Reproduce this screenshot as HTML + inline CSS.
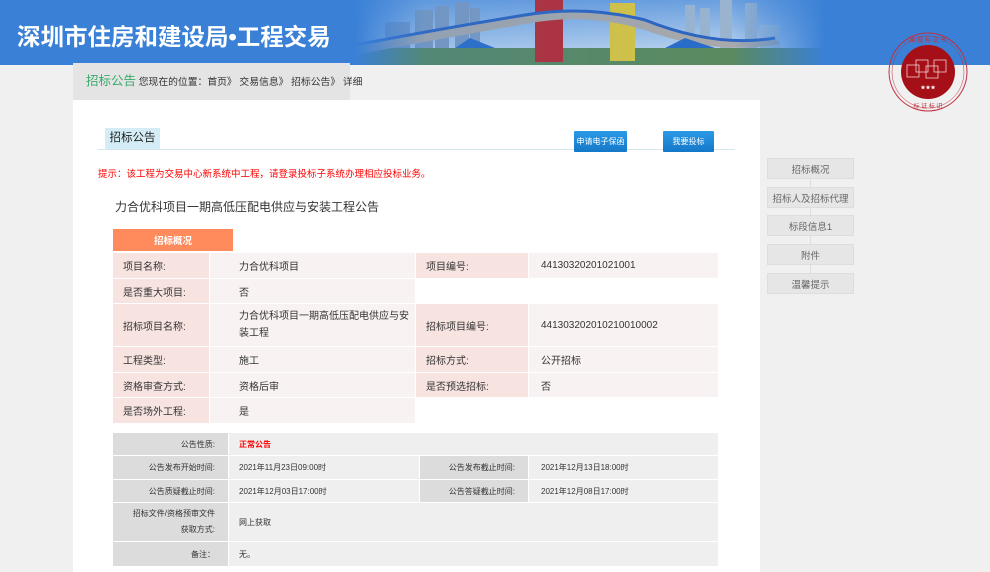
<!DOCTYPE html>
<html><head><meta charset="utf-8"><style>
*{margin:0;padding:0;box-sizing:border-box}
body{width:990px;height:572px;overflow:hidden;background:#f0f0f0;font-family:"Liberation Sans","Noto Sans CJK SC",sans-serif;position:relative;color:#333}
.a{position:absolute}
.hdr{left:0;top:0;width:990px;height:65px;background:#3a80d6}
.title{left:17px;top:18px;font-size:23.5px;font-weight:bold;color:#fff;white-space:nowrap}
.bc{left:73px;top:63px;width:277px;height:37px;background:#e4e4e4;font-size:9.8px;line-height:37px;padding-left:13px;white-space:nowrap;color:#333}
.bc b{font-weight:normal;color:#3aaa6a;font-size:12.5px}
.main{left:73px;top:100px;width:687px;height:472px;background:#fff}
.c{position:absolute;font-size:10px;color:#333;display:flex;align-items:center;white-space:nowrap}
.t2{font-size:8px}
.l2{background:#dcdcdc;justify-content:flex-end;padding-right:13px}
.v2{background:#efefef}
.btn{position:absolute;height:21px;background:linear-gradient(#2b9ae6,#1478c8);color:#fff;font-size:8px;display:flex;align-items:center;justify-content:center;border-radius:1px;white-space:nowrap}
.nav{position:absolute;left:767px;width:87px;height:21px;background:#e6e6e6;border:1px solid #ddd;font-size:9.5px;color:#666;display:flex;align-items:center;justify-content:center}
</style></head><body>
<div class="a hdr"></div>
<svg class="a" style="left:355px;top:0" width="470" height="65" viewBox="0 0 470 65">
<defs>
<linearGradient id="sky" x1="0" y1="0" x2="0" y2="1"><stop offset="0" stop-color="#6a9fdf"/><stop offset="1" stop-color="#d0e2f2"/></linearGradient>
<linearGradient id="fl" x1="0" x2="1"><stop offset="0" stop-color="#3a80d6"/><stop offset="0.15" stop-color="#3a80d6" stop-opacity="0.2"/><stop offset="0.8" stop-color="#3a80d6" stop-opacity="0"/><stop offset="1" stop-color="#3a80d6"/></linearGradient>
</defs>
<rect width="470" height="65" fill="url(#sky)"/>
<g fill="#7f9cc0">
<rect x="30" y="22" width="25" height="43"/><rect x="60" y="10" width="18" height="55"/><rect x="80" y="6" width="14" height="59"/><rect x="100" y="2" width="14" height="63"/><rect x="115" y="8" width="10" height="57"/>
<rect x="330" y="5" width="10" height="60" fill="#9ab4d0"/><rect x="345" y="8" width="10" height="57" fill="#9ab4d0"/><rect x="365" y="0" width="12" height="65" fill="#9ab4d0"/><rect x="390" y="3" width="12" height="62" fill="#9ab4d0"/><rect x="405" y="25" width="20" height="40" fill="#a8c0d8"/>
</g>
<rect x="0" y="48" width="470" height="17" fill="#5a8a5e"/>
<rect x="180" y="0" width="28" height="62" fill="#b92a30"/>
<rect x="255" y="3" width="25" height="58" fill="#d9c640"/>
<path d="M0 45 Q90 28 170 15 Q230 5 290 20 Q360 48 420 38 L425 44 Q360 56 290 30 Q230 12 170 24 Q90 38 0 55Z" fill="#a9a9a9"/>
<path d="M0 45 Q90 28 170 15 Q230 5 290 20 Q360 48 420 38" fill="none" stroke="#2c64c0" stroke-width="3"/>
<path d="M100 48 L115 38 L140 48Z M310 48 L330 38 L360 48Z" fill="#2a6cc8"/>
<rect width="470" height="65" fill="url(#fl)"/>
</svg>
<div class="a title">深圳市住房和建设局•工程交易</div>
<div class="a bc"><b>招标公告</b> 您现在的位置：首页》 交易信息》 招标公告》 详细</div>
<svg class="a" style="left:886px;top:30px" width="84" height="84" viewBox="0 0 84 84">
<circle cx="42" cy="42" r="39" fill="none" stroke="#c03040" stroke-width="1"/>
<circle cx="42" cy="42" r="36" fill="none" stroke="#c03040" stroke-width="0.5"/>
<circle cx="42" cy="42" r="27" fill="#a50f17"/>
<g fill="none" stroke="#f0d0d0" stroke-width="0.8"><rect x="21" y="35" width="12" height="12"/><rect x="30" y="30" width="12" height="12"/><rect x="40" y="36" width="12" height="12"/><rect x="48" y="30" width="12" height="12"/></g>
<text x="42" y="59" font-size="5" fill="#fff" text-anchor="middle">★★★</text>
<text x="42" y="78" font-size="6" fill="#c03040" text-anchor="middle">标 证 标 识</text>
<text x="42" y="12" font-size="6" fill="#c03040" text-anchor="middle">招 投 标 证 书</text>
</svg>
<div class="a main"></div>
<div class="a" style="left:105px;top:128px;width:55px;height:21px;background:#d4ecf5;font-size:11.5px;line-height:21px;text-align:center;color:#222">招标公告</div>
<div class="a" style="left:98px;top:149px;width:637px;height:1px;background:#d3e6ee"></div>
<div class="btn" style="left:574px;top:131px;width:53px">申请电子保函</div>
<div class="btn" style="left:663px;top:131px;width:51px">我要投标</div>
<div class="a" style="left:98px;top:166px;font-size:9.5px;color:#f00;white-space:nowrap">提示：该工程为交易中心新系统中工程，请登录投标子系统办理相应投标业务。</div>
<div class="a" style="left:115px;top:198px;font-size:12px;color:#333;white-space:nowrap">力合优科项目一期高低压配电供应与安装工程公告</div>
<div class="a" style="left:113px;top:229px;width:120px;height:22px;background:#ff8a5c;color:#fff;font-size:9.5px;font-weight:bold;display:flex;align-items:center;justify-content:center">招标概况</div>

<div class="c" style="left:113px;top:253px;width:96px;height:25px;background:#f7e4e0;padding-left:10px">项目名称:</div>
<div class="c" style="left:210px;top:253px;width:205px;height:25px;background:#f8f3f2;padding-left:29px">力合优科项目</div>
<div class="c" style="left:416px;top:253px;width:112px;height:25px;background:#f7e4e0;padding-left:10px">项目编号:</div>
<div class="c" style="left:529px;top:253px;width:189px;height:25px;background:#f8f3f2;padding-left:12px">44130320201021001</div>
<div class="c" style="left:113px;top:279px;width:96px;height:24px;background:#f7e4e0;padding-left:10px">是否重大项目:</div>
<div class="c" style="left:210px;top:279px;width:205px;height:24px;background:#f8f3f2;padding-left:29px">否</div>
<div class="c" style="left:113px;top:304px;width:96px;height:42px;background:#f7e4e0;padding-left:10px">招标项目名称:</div>
<div class="c" style="left:210px;top:304px;width:205px;height:42px;background:#f8f3f2;padding-left:29px;white-space:normal;line-height:17px">力合优科项目一期高低压配电供应与安装工程</div>
<div class="c" style="left:416px;top:304px;width:112px;height:42px;background:#f7e4e0;padding-left:10px">招标项目编号:</div>
<div class="c" style="left:529px;top:304px;width:189px;height:42px;background:#f8f3f2;padding-left:12px">441303202010210010002</div>
<div class="c" style="left:113px;top:347px;width:96px;height:25px;background:#f7e4e0;padding-left:10px">工程类型:</div>
<div class="c" style="left:210px;top:347px;width:205px;height:25px;background:#f8f3f2;padding-left:29px">施工</div>
<div class="c" style="left:416px;top:347px;width:112px;height:25px;background:#f7e4e0;padding-left:10px">招标方式:</div>
<div class="c" style="left:529px;top:347px;width:189px;height:25px;background:#f8f3f2;padding-left:12px">公开招标</div>
<div class="c" style="left:113px;top:373px;width:96px;height:24px;background:#f7e4e0;padding-left:10px">资格审查方式:</div>
<div class="c" style="left:210px;top:373px;width:205px;height:24px;background:#f8f3f2;padding-left:29px">资格后审</div>
<div class="c" style="left:416px;top:373px;width:112px;height:24px;background:#f7e4e0;padding-left:10px">是否预选招标:</div>
<div class="c" style="left:529px;top:373px;width:189px;height:24px;background:#f8f3f2;padding-left:12px">否</div>
<div class="c" style="left:113px;top:398px;width:96px;height:25px;background:#f7e4e0;padding-left:10px">是否场外工程:</div>
<div class="c" style="left:210px;top:398px;width:205px;height:25px;background:#f8f3f2;padding-left:29px">是</div>

<div class="c t2 l2" style="left:113px;top:433px;width:115px;height:22px">公告性质:</div>
<div class="c t2 v2" style="left:229px;top:433px;width:489px;height:22px;padding-left:10px;color:#f00;font-weight:bold">正常公告</div>
<div class="c t2 l2" style="left:113px;top:456px;width:115px;height:23px">公告发布开始时间:</div>
<div class="c t2 v2" style="left:229px;top:456px;width:190px;height:23px;padding-left:10px">2021年11月23日09:00时</div>
<div class="c t2 l2" style="left:420px;top:456px;width:108px;height:23px">公告发布截止时间:</div>
<div class="c t2 v2" style="left:529px;top:456px;width:189px;height:23px;padding-left:12px">2021年12月13日18:00时</div>
<div class="c t2 l2" style="left:113px;top:480px;width:115px;height:22px">公告质疑截止时间:</div>
<div class="c t2 v2" style="left:229px;top:480px;width:190px;height:22px;padding-left:10px">2021年12月03日17:00时</div>
<div class="c t2 l2" style="left:420px;top:480px;width:108px;height:22px">公告答疑截止时间:</div>
<div class="c t2 v2" style="left:529px;top:480px;width:189px;height:22px;padding-left:12px">2021年12月08日17:00时</div>
<div class="c t2 l2" style="left:113px;top:503px;width:115px;height:38px;white-space:normal;text-align:right;line-height:16px;padding-left:14px">招标文件/资格预审文件获取方式:</div>
<div class="c t2 v2" style="left:229px;top:503px;width:489px;height:38px;padding-left:10px">网上获取</div>
<div class="c t2 l2" style="left:113px;top:542px;width:115px;height:24px">备注：</div>
<div class="c t2 v2" style="left:229px;top:542px;width:489px;height:24px;padding-left:10px">无。</div>

<div class="a" style="left:810px;top:170px;width:1px;height:115px;background:#ddd"></div>
<div class="nav" style="top:158px">招标概况</div>
<div class="nav" style="top:187px">招标人及招标代理</div>
<div class="nav" style="top:215px">标段信息1</div>
<div class="nav" style="top:244px">附件</div>
<div class="nav" style="top:273px">温馨提示</div>
</body></html>
